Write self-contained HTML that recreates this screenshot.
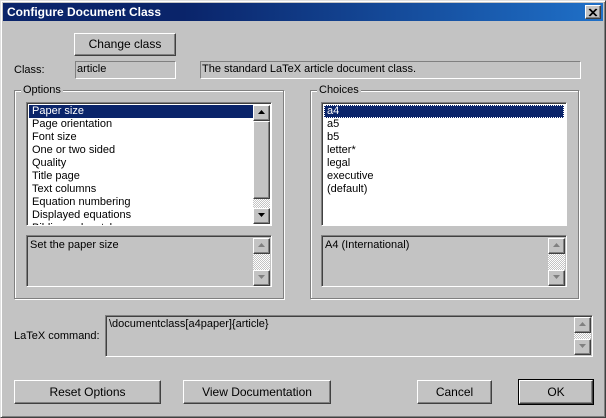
<!DOCTYPE html>
<html><head><style>
*{box-sizing:border-box;margin:0;padding:0}
body{width:606px;height:418px;background:#c3c3c3;font-family:"Liberation Sans",sans-serif;font-size:11px;color:#000;position:relative;overflow:hidden}
.a{position:absolute}
.win{left:0;top:0;width:606px;height:418px;border:1px solid;border-color:#e0e0e0 #404040 #404040 #e0e0e0;box-shadow:inset 1px 1px #fff,inset -1px -1px #808080}
.title{left:3px;top:3px;width:600px;height:18px;background:linear-gradient(90deg,#0a246a 0%,#0a246a 30%,#1f70c8);color:#fff;font-weight:bold;font-size:12px;line-height:18px;padding-left:4px}
.btn{background:#c3c3c3;border:1px solid;border-color:#fff #404040 #404040 #fff;box-shadow:inset -1px -1px #808080;text-align:center;font-size:11px}
.sunk{border:1px solid;border-color:#808080 #fff #fff #808080;box-shadow:inset 1px 1px #404040}
.flat{border:1px solid;border-color:#808080 #fff #fff #808080}
.grp{border:1px solid #808080;box-shadow:1px 1px #fff,inset 1px 1px #fff}
.lg{background:#c3c3c3;padding:0 2px;top:-7px;left:6px}
.sb{width:17px;background:repeating-conic-gradient(#c3c3c3 0 25%,#fff 0 50%) 0 0/2px 2px}
.ar{width:17px;height:16px}
.ar svg{display:block;margin:4px auto}
.row{height:13px;line-height:13px;padding-left:3px;white-space:nowrap}
.sel{background:#0a246a;color:#fff}
</style></head><body>
<div class="a win"></div>
<div class="a title">Configure Document Class</div>
<div class="a btn" style="left:585px;top:5px;width:16px;height:14px;"><svg width="10" height="9" style="display:block;margin:2px auto" viewBox="0 0 10 9"><path d="M1 1L8 8M2 1L9 8M8 1L1 8M9 1L2 8" stroke="#000" stroke-width="1"/></svg></div>

<div class="a btn" style="left:74px;top:33px;width:102px;height:23px;line-height:21px;font-size:12px">Change class</div>
<div class="a" style="left:14px;top:64px;font-size:11px">Class:</div>
<div class="a flat" style="left:75px;top:61px;width:101px;height:18px;padding:1px 1px">article</div>
<div class="a flat" style="left:200px;top:61px;width:381px;height:18px;padding:1px 1px">The standard LaTeX article document class.</div>

<div class="a grp" style="left:14px;top:90px;width:270px;height:209px"><div class="a lg">Options</div></div>
<div class="a sunk" style="left:26px;top:102px;width:246px;height:124px;background:#fff;overflow:hidden;padding:2px 0 0 2px">
<div class="row sel" style="width:225px">Paper size</div>
<div class="row">Page orientation</div><div class="row">Font size</div><div class="row">One or two sided</div><div class="row">Quality</div><div class="row">Title page</div><div class="row">Text columns</div><div class="row">Equation numbering</div><div class="row">Displayed equations</div><div class="row">Bibliography style</div>
<div class="a sb" style="right:0;top:2px;height:119px;right:1px"></div>
<div class="a btn ar" style="right:1px;top:2px"><svg width="7" height="4"><path d="M3.5 0L7 4H0Z"/></svg></div>
<div class="a btn" style="right:1px;top:18px;width:17px;height:78px"></div>
<div class="a btn ar" style="right:1px;top:105px"><svg width="7" height="4"><path d="M0 0H7L3.5 4Z"/></svg></div>
</div>
<div class="a sunk" style="left:26px;top:235px;width:246px;height:52px;padding:3px 3px">Set the paper size
<div class="a sb" style="right:1px;top:2px;height:47px"></div>
<div class="a btn ar" style="right:1px;top:2px"><svg width="7" height="4"><path d="M3.5 0L7 4H0Z" fill="#808080"/></svg></div>
<div class="a btn ar" style="right:1px;top:34px"><svg width="7" height="4"><path d="M0 0H7L3.5 4Z" fill="#808080"/></svg></div>
</div>

<div class="a grp" style="left:310px;top:90px;width:269px;height:209px"><div class="a lg">Choices</div></div>
<div class="a sunk" style="left:321px;top:102px;width:246px;height:124px;background:#fff;overflow:hidden;padding:2px 2px 0 2px">
<div class="row sel" style="outline:1px dotted #fff;outline-offset:-1px">a4</div>
<div class="row">a5</div><div class="row">b5</div><div class="row">letter*</div><div class="row">legal</div><div class="row">executive</div><div class="row">(default)</div>
</div>
<div class="a sunk" style="left:321px;top:235px;width:246px;height:52px;padding:3px 3px">A4 (International)
<div class="a sb" style="right:1px;top:2px;height:47px"></div>
<div class="a btn ar" style="right:1px;top:2px"><svg width="7" height="4"><path d="M3.5 0L7 4H0Z" fill="#808080"/></svg></div>
<div class="a btn ar" style="right:1px;top:34px"><svg width="7" height="4"><path d="M0 0H7L3.5 4Z" fill="#808080"/></svg></div>
</div>

<div class="a" style="left:14px;top:330px">LaTeX command:</div>
<div class="a sunk" style="left:105px;top:315px;width:488px;height:42px;padding:2px 3px">\documentclass[a4paper]{article}
<div class="a sb" style="right:1px;top:1px;height:38px"></div>
<div class="a btn ar" style="right:1px;top:1px"><svg width="7" height="4"><path d="M3.5 0L7 4H0Z" fill="#808080"/></svg></div>
<div class="a btn ar" style="right:1px;top:23px"><svg width="7" height="4"><path d="M0 0H7L3.5 4Z" fill="#808080"/></svg></div>
</div>

<div class="a btn" style="left:14px;top:380px;width:147px;height:24px;line-height:22px;font-size:12px">Reset Options</div>
<div class="a btn" style="left:183px;top:380px;width:148px;height:24px;line-height:22px;font-size:12px">View Documentation</div>
<div class="a btn" style="left:417px;top:380px;width:75px;height:24px;line-height:22px;font-size:12px">Cancel</div>
<div class="a" style="left:518px;top:379px;width:76px;height:26px;border:1px solid #000"><div class="a btn" style="left:0;top:0;width:74px;height:24px;line-height:22px;font-size:12px">OK</div></div>
</body></html>
